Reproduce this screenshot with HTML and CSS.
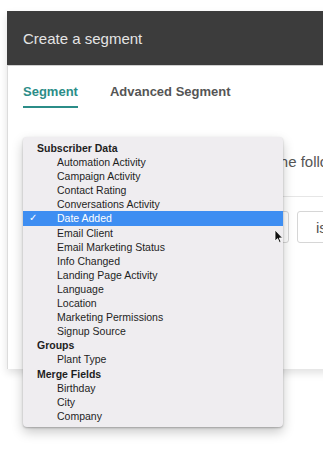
FILE: index.html
```html
<!DOCTYPE html>
<html lang="en">
<head>
    <meta charset="UTF-8">
    <meta name="viewport" content="width=device-width, initial-scale=1.0">
    <title>Create a segment</title>
    <link rel="stylesheet" href="styles.css">
</head>
<body>
    <div class="modal">
        <header class="modal-header">
            <h1>Create a segment</h1>
        </header>
        <div class="modal-body">
            <nav class="tabs">
                <a href="#" class="tab tab-active">Segment</a>
                <a href="#" class="tab">Advanced Segment</a>
            </nav>
            <div class="match-line">
                <span class="select-box match-select">any</span>
                <span>of the following conditions:</span>
            </div>
            <div class="conditions">
                <div class="condition-row">
                    <span class="select-box field-select">Date Added</span>
                    <span class="select-box op-select">is</span>
                </div>
            </div>
        </div>
    </div>

    <!-- native select list, opened -->
    <ul class="dropdown">
        <li class="group">Subscriber Data</li>
        <li class="option">Automation Activity</li>
        <li class="option">Campaign Activity</li>
        <li class="option">Contact Rating</li>
        <li class="option">Conversations Activity</li>
        <li class="option selected"><span class="check">&#10003;</span>Date Added</li>
        <li class="option">Email Client</li>
        <li class="option">Email Marketing Status</li>
        <li class="option">Info Changed</li>
        <li class="option">Landing Page Activity</li>
        <li class="option">Language</li>
        <li class="option">Location</li>
        <li class="option">Marketing Permissions</li>
        <li class="option">Signup Source</li>
        <li class="group">Groups</li>
        <li class="option">Plant Type</li>
        <li class="group">Merge Fields</li>
        <li class="option">Birthday</li>
        <li class="option">City</li>
        <li class="option">Company</li>
    </ul>

    <svg class="cursor" width="10" height="15" viewBox="0 0 10 15"><path d="M1 1 L1 12 L3.6 9.6 L5.4 13.6 L7 12.9 L5.3 9 L8.6 9 Z" fill="#111" stroke="#fff" stroke-width="0.8"/></svg>
</body>
</html>
```

FILE: styles.css
```css
:root {
    --font-body: 'Liberation Sans', Arial, sans-serif;
    --color-header: #3c3c3c;
    --color-teal: #2b8d88;
    --color-text: #555555;
    --color-menu: #efedf0;
    --color-highlight: #3e8ef2;
}
body {
    margin: 0;
    background: #ffffff;
    font-family: var(--font-body);
    overflow: hidden;
    height: 450px;
}

/* modal */
.modal {
    margin: 11px 0 0 7px;
    width: 420px;
    box-shadow: 0 4px 8px rgba(0,0,0,0.12);
}
.modal-header {
    background: var(--color-header);
    height: 54px;
    display: flex;
    align-items: center;
    padding-left: 16px;
}
.modal-header h1 {
    margin: 0;
    font-size: 15px;
    font-weight: normal;
    color: #e4e4e4;
    padding-top: 1px;
}
.modal-body {
    background: #ffffff;
    border-left: 1px solid #dcdcdc;
    border-top: 1px solid #d0d0d0;
    padding: 0 0 0 15px;
    height: 303px;
}

.tabs {
    display: flex;
    gap: 32px;
    padding-top: 18px;
}
.tab {
    font-size: 13px;
    font-weight: bold;
    line-height: 16px;
    color: var(--color-text);
    text-decoration: none;
    padding-bottom: 6px;
    border-bottom: 2px solid transparent;
}
.tab-active {
    color: var(--color-teal);
    border-bottom-color: var(--color-teal);
}

.match-line {
    display: flex;
    align-items: center;
    gap: 8px;
    margin-top: 37px;
    font-size: 15px;
    color: var(--color-text);
    white-space: nowrap;
}
.select-box {
    display: flex;
    align-items: center;
    flex-shrink: 0;
    box-sizing: border-box;
    height: 32px;
    padding: 0 18px;
    border: 1px solid #d6d6d6;
    border-radius: 3px;
    font-size: 15px;
    color: var(--color-text);
}
.match-select { width: 228px; }

.conditions {
    margin-top: 19px;
    border-top: 1px solid #e6e6e6;
    padding-top: 14px;
}
.condition-row {
    display: flex;
    gap: 8px;
}
.field-select { width: 266px; }
.op-select { width: 100px; }

/* opened select list */
.dropdown {
    position: absolute;
    left: 23px;
    top: 137px;
    width: 260px;
    margin: 0;
    padding: 4px 0 4px;
    list-style: none;
    background: var(--color-menu);
    border-radius: 4px;
    box-shadow: 0 1px 2px rgba(0,0,0,0.25), 0 5px 12px rgba(0,0,0,0.22);
    font-size: 10.5px;
    color: #1e1e1e;
}
.dropdown li {
    height: 14.1px;
    line-height: 14.1px;
    white-space: nowrap;
}
.group {
    font-weight: bold;
    padding-left: 14px;
}
.option {
    position: relative;
    padding-left: 34px;
}
.selected {
    background: var(--color-highlight);
    color: #ffffff;
}
.check {
    position: absolute;
    left: 6px;
    font-size: 10px;
}

.cursor {
    position: absolute;
    left: 274px;
    top: 229px;
}
```
